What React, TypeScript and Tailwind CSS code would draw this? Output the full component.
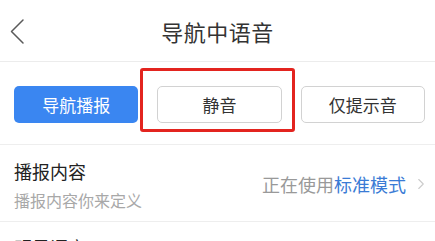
import { ChevronRight } from "lucide-react";

const font = { fontFamily: '"Noto Sans CJK SC", "Noto Sans", sans-serif' };

export default function App() {
  return (
    <div className="w-[435px] h-[241px] overflow-hidden bg-white" style={font}>
      {/* header */}
      <div className="relative h-[62px] flex items-center justify-center border-b border-[#ececec]">
        <svg className="absolute left-[9px] top-[18px]" width="16" height="27" viewBox="0 0 16 27" fill="none">
          <polyline points="14,2 2.5,13.5 14,25" stroke="#5a5a5a" strokeWidth="1.5" strokeLinecap="round" strokeLinejoin="round" />
        </svg>
        <h1 className="text-[22px] text-[#333] tracking-[0.5px] leading-none">导航中语音</h1>
      </div>

      {/* mode buttons */}
      <div className="relative h-[83px] border-b border-[#eeeeee] pl-[14px] pr-[10px] pt-[24px]">
        <div className="grid grid-cols-3 gap-[19px]">
          <button className="h-[37px] rounded-[5px] bg-[#3a86f1] text-white text-[17px]">导航播报</button>
          <button className="h-[37px] rounded-[5px] border border-[#d2d2d2] text-[#333] text-[17px]">静音</button>
          <button className="h-[37px] rounded-[5px] border border-[#d2d2d2] text-[#333] text-[17px]">仅提示音</button>
        </div>
        <div className="absolute left-[140px] top-[6px] w-[155px] h-[64px] border-[3px] border-[#e3241f] rounded-[3px]" />
      </div>

      {/* content row */}
      <div className="h-[77px] flex items-center justify-between pl-[14px] pr-[5px] border-b border-[#eeeeee]">
        <div className="flex flex-col gap-[12px] pt-[4px]">
          <span className="text-[18px] leading-none text-[#222]">播报内容</span>
          <span className="text-[16px] leading-none text-[#a8a8a8]">播报内容你来定义</span>
        </div>
        <div className="flex items-center pt-[2px]">
          <span className="text-[18px] text-[#999]">正在使用</span>
          <span className="text-[18px] text-[#3a7bd5]">标准模式</span>
          <ChevronRight className="w-[18px] h-[18px] text-[#cccccc] ml-[6px]" strokeWidth={1.5} />
        </div>
      </div>

      <div className="pl-[14px] pt-[14px]">
        <span className="text-[18px] leading-none text-[#222]">明星语音</span>
      </div>
    </div>
  );
}
